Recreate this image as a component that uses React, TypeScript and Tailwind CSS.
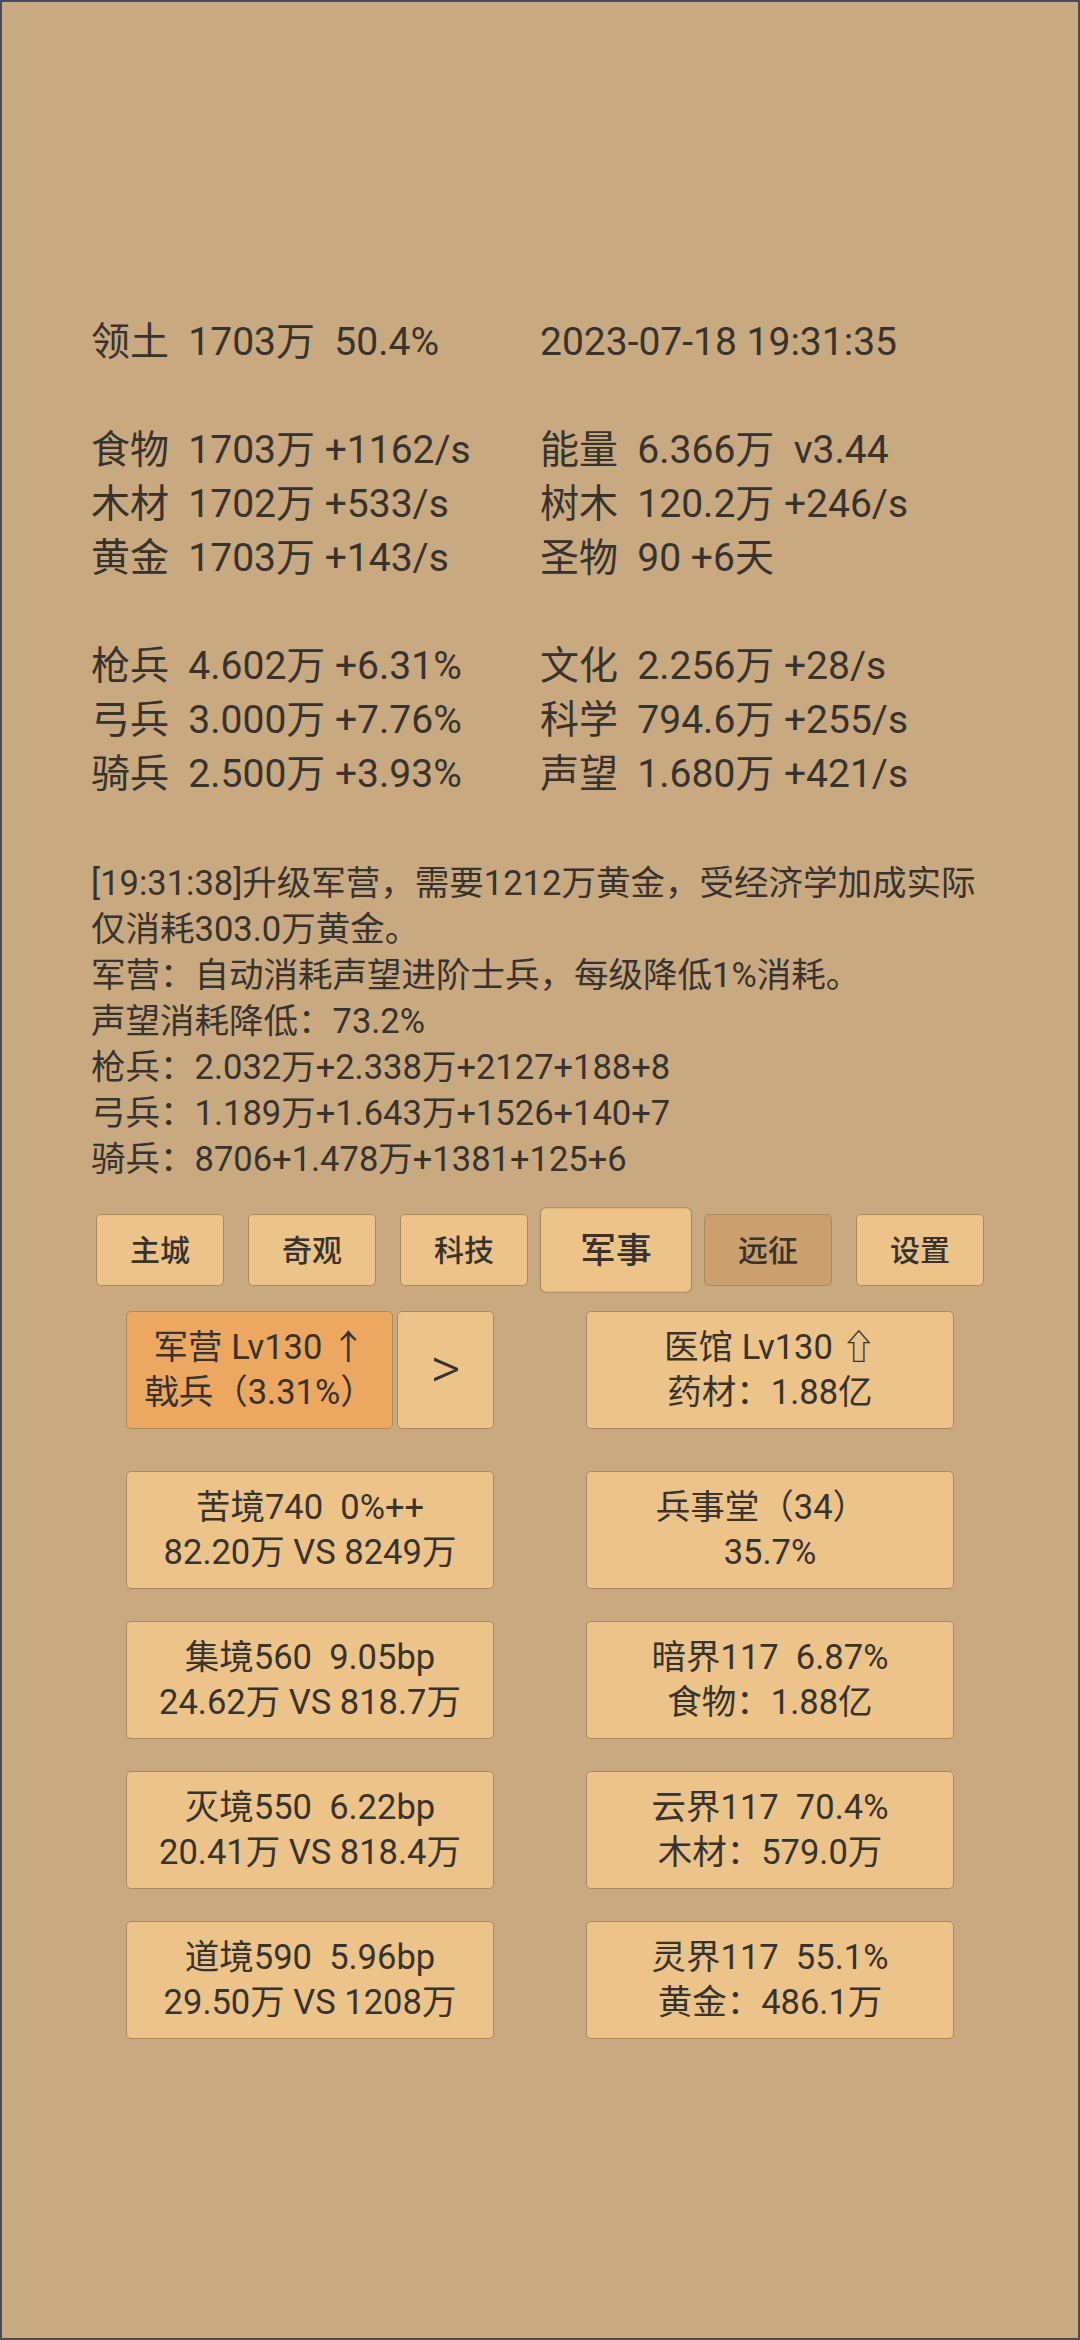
import React from "react";

const leftRows: [string, string][] = [
  ["领土  1703万  50.4%", "2023-07-18 19:31:35"],
  ["", ""],
  ["食物  1703万 +1162/s", "能量  6.366万  v3.44"],
  ["木材  1702万 +533/s", "树木  120.2万 +246/s"],
  ["黄金  1703万 +143/s", "圣物  90 +6天"],
  ["", ""],
  ["枪兵  4.602万 +6.31%", "文化  2.256万 +28/s"],
  ["弓兵  3.000万 +7.76%", "科学  794.6万 +255/s"],
  ["骑兵  2.500万 +3.93%", "声望  1.680万 +421/s"],
];

const logLines = [
  "[19:31:38]升级军营，需要1212万黄金，受经济学加成实际",
  "仅消耗303.0万黄金。",
  "军营：自动消耗声望进阶士兵，每级降低1%消耗。",
  "声望消耗降低：73.2%",
  "枪兵：2.032万+2.338万+2127+188+8",
  "弓兵：1.189万+1.643万+1526+140+7",
  "骑兵：8706+1.478万+1381+125+6",
];

const tabs = ["主城", "奇观", "科技", "军事", "远征", "设置"];

const cardRows: [[string, string], [string, string]][] = [
  [["苦境740  0%++", "82.20万 VS 8249万"], ["兵事堂（34）  ", "35.7%"]],
  [["集境560  9.05bp", "24.62万 VS 818.7万"], ["暗界117  6.87%", "食物：1.88亿"]],
  [["灭境550  6.22bp", "20.41万 VS 818.4万"], ["云界117  70.4%", "木材：579.0万"]],
  [["道境590  5.96bp", "29.50万 VS 1208万"], ["灵界117  55.1%", "黄金：486.1万"]],
];

function Card({ l1, l2 }: { l1: string; l2: string }) {
  return (
    <div className="h-[118px] rounded-[5px] border-[1.5px] border-[#a88a60] bg-[#ecc389] flex flex-col items-center justify-center text-[34.5px] leading-[45px] whitespace-pre">
      <div>{l1}</div>
      <div>{l2}</div>
    </div>
  );
}

export default function App() {
  return (
    <div className="w-[1080px] h-[2340px] overflow-hidden bg-[#c9a980] border-2 border-[#474b5c] text-[#37332f] [font-family:Roboto,'Noto_Sans_CJK_SC',sans-serif]">
      {/* stats */}
      <div className="pt-[313px] pl-[89px]">
        <div className="w-[898px] text-[39px] leading-[54px] whitespace-pre">
          {leftRows.map(([a, b], i) => (
            <div key={i} className="grid grid-cols-2 h-[54px]">
              <div>{a}</div>
              <div>{b}</div>
            </div>
          ))}
        </div>
        {/* log */}
        <div className="mt-[59px] text-[34.5px] leading-[46px] whitespace-nowrap">
          {logLines.map((t, i) => (
            <div key={i}>{t}</div>
          ))}
        </div>
      </div>

      {/* tabs */}
      <div className="mt-[32px] flex justify-center gap-[24px]">
        {tabs.map((t) => (
          <div
            key={t}
            className={
              "w-[128px] h-[72px] rounded-[5px] border-[1.5px] border-[#a88a60] flex items-center justify-center text-[30px] font-medium " +
              (t === "远征" ? "bg-[#c9a06e]" : "bg-[#ecc389]") +
              (t === "军事" ? " scale-[1.19]" : "")
            }
          >
            {t}
          </div>
        ))}
      </div>

      {/* cards */}
      <div className="ml-[78px] w-[920px] mt-[25px]">
        <div className="grid grid-cols-2">
          <div className="px-[46px] flex gap-[4px]">
            <div className="w-[267px] h-[118px] rounded-[5px] border-[1.5px] border-[#a88a60] bg-[#eca860] flex flex-col items-center justify-center text-[34.5px] leading-[45px] whitespace-pre">
              <div>军营 Lv130 ↑</div>
              <div>戟兵（3.31%）</div>
            </div>
            <div className="flex-1 h-[118px] rounded-[5px] border-[1.5px] border-[#a88a60] bg-[#ecc389] flex items-center justify-center text-[58px] font-light leading-none pb-[4px]">
              &gt;
            </div>
          </div>
          <div className="px-[46px]">
            <Card l1="医馆 Lv130 ⇧" l2="药材：1.88亿" />
          </div>
        </div>
        {cardRows.map((row, i) => (
          <div key={i} className={"grid grid-cols-2 " + (i === 0 ? "mt-[42px]" : "mt-[32px]")}>
            <div className="px-[46px]">
              <Card l1={row[0][0]} l2={row[0][1]} />
            </div>
            <div className="px-[46px]">
              <Card l1={row[1][0]} l2={row[1][1]} />
            </div>
          </div>
        ))}
      </div>
    </div>
  );
}
